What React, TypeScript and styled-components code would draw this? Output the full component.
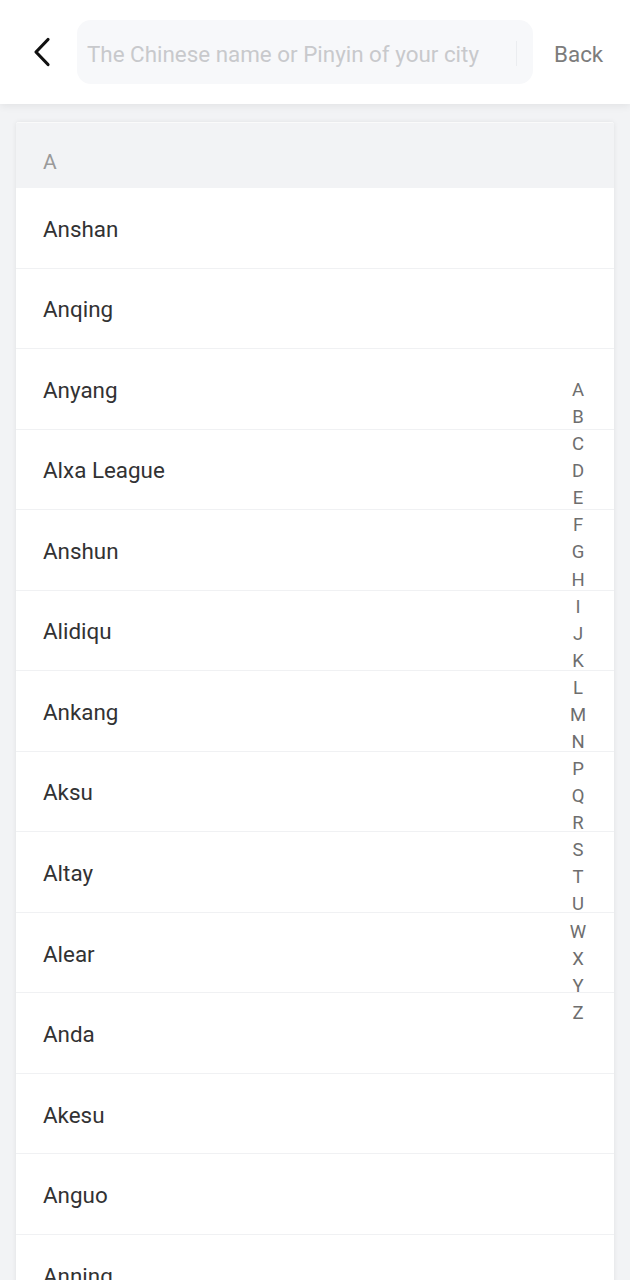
import React from "react";
import styled, { createGlobalStyle } from "styled-components";

const GlobalStyle = createGlobalStyle`
  html, body {
    margin: 0;
    padding: 0;
    background: #f2f3f5;
    font-family: Roboto, "Noto Sans", "Liberation Sans", sans-serif;
  }
  * { box-sizing: border-box; }
`;

const Page = styled.div`
  width: 630px;
  min-height: 1280px;
  background: #f2f3f5;
  overflow: hidden;
`;

const Header = styled.header`
  position: relative;
  z-index: 2;
  height: 104px;
  background: #ffffff;
  display: flex;
  align-items: center;
  padding: 0 0 0 28px;
  box-shadow: 0 2px 8px rgba(0, 0, 0, 0.07);
`;

const BackIcon = styled.button`
  width: 28px;
  height: 40px;
  padding: 0;
  border: none;
  background: transparent;
  display: flex;
  align-items: center;
  justify-content: center;
  margin-right: 21px;
`;

const SearchBox = styled.div`
  width: 456px;
  height: 64px;
  border-radius: 14px;
  background: #f7f8fa;
  display: flex;
  align-items: center;
  padding: 3px 16px 0 10px;
`;

const Placeholder = styled.span`
  flex: 1;
  font-size: 22.4px;
  color: #c8c9cc;
  white-space: nowrap;
`;

const Divider = styled.span`
  width: 1.5px;
  height: 25px;
  background: #ebedf0;
`;

const BackText = styled.span`
  margin-left: 21px;
  padding-top: 3px;
  font-size: 22.4px;
  color: #7c7c7c;
`;

const Body = styled.main`
  position: relative;
  padding: 18px 16px 0;
`;

const Card = styled.section`
  background: #ffffff;
  border-radius: 3px 3px 0 0;
  box-shadow: 0 0 5px rgba(0, 0, 0, 0.08);
  overflow: hidden;
`;

const SectionTitle = styled.div`
  height: 66px;
  display: flex;
  align-items: center;
  padding: 12px 0 0 27px;
  background: #f2f3f5;
  font-size: 21px;
  color: #9a9a9a;
  border-top: 1px solid #fafafa;
`;

const Row = styled.div`
  height: 80.54px;
  display: flex;
  align-items: center;
  padding: 2px 0 0 27px;
  font-size: 22.4px;
  color: #323233;
  border-bottom: 1px solid #f0f1f3;
`;

const IndexBar = styled.nav`
  position: absolute;
  top: 273px;
  right: 36px;
  width: 32px;
  display: flex;
  flex-direction: column;
  align-items: center;
`;

const IndexLetter = styled.span`
  height: 27.09px;
  line-height: 27.09px;
  font-size: 18.5px;
  color: #6e6e6e;
`;

const cities = [
  "Anshan",
  "Anqing",
  "Anyang",
  "Alxa League",
  "Anshun",
  "Alidiqu",
  "Ankang",
  "Aksu",
  "Altay",
  "Alear",
  "Anda",
  "Akesu",
  "Anguo",
  "Anning",
  "Anlu",
];

const letters = "ABCDEFGHIJKLMNPQRSTUWXYZ".split("");

export default function App() {
  return (
    <>
      <GlobalStyle />
      <Page>
        <Header>
          <BackIcon aria-label="back">
            <svg width="20" height="30" viewBox="0 0 20 30" fill="none">
              <polyline
                points="16,2.5 4,15 16,27.5"
                stroke="#111"
                strokeWidth="3.2"
                strokeLinecap="round"
                strokeLinejoin="round"
              />
            </svg>
          </BackIcon>
          <SearchBox>
            <Placeholder>The Chinese name or Pinyin of your city</Placeholder>
            <Divider />
          </SearchBox>
          <BackText>Back</BackText>
        </Header>
        <Body>
          <Card>
            <SectionTitle>A</SectionTitle>
            {cities.map((c) => (
              <Row key={c}>{c}</Row>
            ))}
          </Card>
          <IndexBar>
            {letters.map((l) => (
              <IndexLetter key={l}>{l}</IndexLetter>
            ))}
          </IndexBar>
        </Body>
      </Page>
    </>
  );
}
